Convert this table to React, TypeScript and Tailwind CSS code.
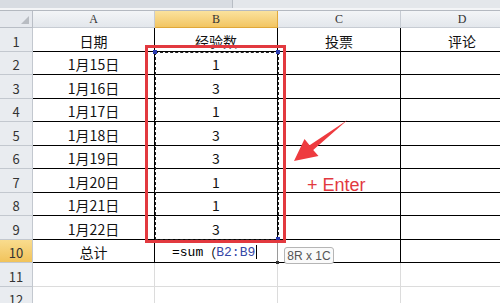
import React from "react";

const rows: [string, string][] = [
  ["1月15日", "1"],
  ["1月16日", "3"],
  ["1月17日", "1"],
  ["1月18日", "3"],
  ["1月19日", "3"],
  ["1月20日", "1"],
  ["1月21日", "1"],
  ["1月22日", "3"],
];

const cjk = { fontFamily: '"Noto Sans CJK SC", "Noto Sans", sans-serif' };
const grid = "grid grid-cols-[33px_122px_123px_123px_123px]";

function RowHead({ n, active }: { n: number; active?: boolean }) {
  return (
    <div
      className={`flex items-end justify-center border-r border-b border-[#c3c8cf] pb-[3px] text-[13px] leading-none text-[#333] ${
        active ? "bg-gradient-to-b from-[#f9dc8e] to-[#f1c35a]" : "bg-[#e9ecf0]"
      }`}
    >
      {n}
    </div>
  );
}

function Cell({ children, right, bottom = true }: { children?: React.ReactNode; right?: boolean; bottom?: boolean }) {
  return (
    <div
      className={`flex items-end justify-center pb-[3px] text-[14px] leading-none text-[#111] ${
        bottom ? "border-b border-black" : "border-b border-[#dcdcdc]"
      } ${right ? "border-r border-black" : "border-r border-[#dcdcdc]"}`}
    >
      {children}
    </div>
  );
}

export default function App() {
  return (
    <div className="relative h-[303px] w-[500px] overflow-hidden bg-white" style={cjk}>
      {/* top strip */}
      <div className="flex h-[8px]">
        <div className="w-[232px] bg-[#d8dce2]" />
        <div className="flex-1 border-l border-[#b8bdc4] bg-[#e4e7eb]" />
      </div>
      <div className="h-[2px] bg-[#f4f5f7]" />
      <div className="h-px bg-[#b4b9c0]" />

      {/* column headers */}
      <div className={`${grid} h-[17px]`}>
        <div className="relative border-r border-b border-[#b9bec6] bg-[#e6e9ee]">
          <svg className="absolute right-[3px] bottom-[3px]" width="8" height="8" viewBox="0 0 8 8">
            <polygon points="8,0 8,8 0,8" fill="#b8bcc2" />
          </svg>
        </div>
        {["A", "B", "C", "D"].map((c) => (
          <div
            key={c}
            className={`flex items-center justify-center border-r border-b text-[12px] leading-none text-[#333] ${
              c === "B"
                ? "border-[#e0a83a] bg-gradient-to-b from-[#fae29d] to-[#f2c561]"
                : "border-[#c7ccd3] bg-gradient-to-b from-[#f3f5f7] to-[#e3e7ec]"
            }`}
            style={{ fontFamily: '"Liberation Serif", serif' }}
          >
            {c}
          </div>
        ))}
      </div>

      {/* body */}
      <div className="flex flex-col">
        <div className={`${grid} h-[23.5px]`}>
          <RowHead n={1} />
          <Cell right>日期</Cell>
          <Cell>经验数</Cell>
          <Cell right>投票</Cell>
          <Cell>评论</Cell>
        </div>
        {rows.map(([d, v], i) => (
          <div key={d} className={`${grid} h-[23.5px]`}>
            <RowHead n={i + 2} />
            <Cell right>{d}</Cell>
            <Cell>{v}</Cell>
            <Cell right />
            <Cell />
          </div>
        ))}
        <div className={`${grid} h-[23.5px]`}>
          <RowHead n={10} active />
          <Cell right>总计</Cell>
          <div className="relative flex items-end border-b border-r border-b-black border-r-[#9a9a9a] pb-[3px] pl-[17px] text-[13px] leading-none">
            <span style={{ fontFamily: '"Liberation Mono", monospace' }}>=sum</span>
            <span>（</span>
            <span className="text-[#3548a6]" style={{ fontFamily: '"Liberation Mono", monospace' }}>
              B2:B9
            </span>
            <span className="ml-px h-[14px] w-px bg-black" />
            <span className="absolute -right-[2px] -bottom-[2px] h-[3px] w-[3px] bg-[#333]" />
          </div>
          <Cell right />
          <Cell />
        </div>
        {[11, 12].map((n) => (
          <div key={n} className={`${grid} h-[23.5px]`}>
            <RowHead n={n} />
            <Cell right={false} bottom={false} />
            <Cell bottom={false} />
            <Cell bottom={false} />
            <Cell bottom={false} />
          </div>
        ))}
      </div>

      {/* copy-range marching ants */}
      <div className="absolute top-[52px] left-[155px] h-[188px] w-[124px] border border-dashed border-[#222]" />
      <div className="absolute top-[50px] left-[153px] h-[4px] w-[4px] bg-[#2a3bb0]" />
      <div className="absolute top-[50px] left-[276px] h-[4px] w-[4px] bg-[#2a3bb0]" />
      <div className="absolute top-[237px] left-[276px] h-[4px] w-[4px] bg-[#2a3bb0]" />

      {/* red highlight box */}
      <div className="absolute top-[45px] left-[145px] h-[198px] w-[141px] border-[3px] border-[#e2393f]" />

      {/* arrow */}
      <svg className="absolute top-0 left-0" width="500" height="303" viewBox="0 0 500 303">
        <polygon
          points="294,161 304.5,139 309.6,145.3 347.5,120 313.2,149.9 318.5,156"
          fill="#ee3b3f"
        />
      </svg>

      <div
        className="absolute top-[176px] left-[307px] text-[18px] leading-none text-[#e2393f]"
        style={{ fontFamily: '"Liberation Sans", Arial, sans-serif' }}
      >
        + Enter
      </div>

      {/* tooltip */}
      <div
        className="absolute top-[247px] left-[284px] flex h-[17px] w-[50px] items-center justify-center rounded-[3px] border border-[#b5b5b5] bg-[#fafafa] text-[12px] leading-none text-[#555]"
        style={{ fontFamily: '"Liberation Sans", Arial, sans-serif' }}
      >
        8R x 1C
      </div>
    </div>
  );
}
